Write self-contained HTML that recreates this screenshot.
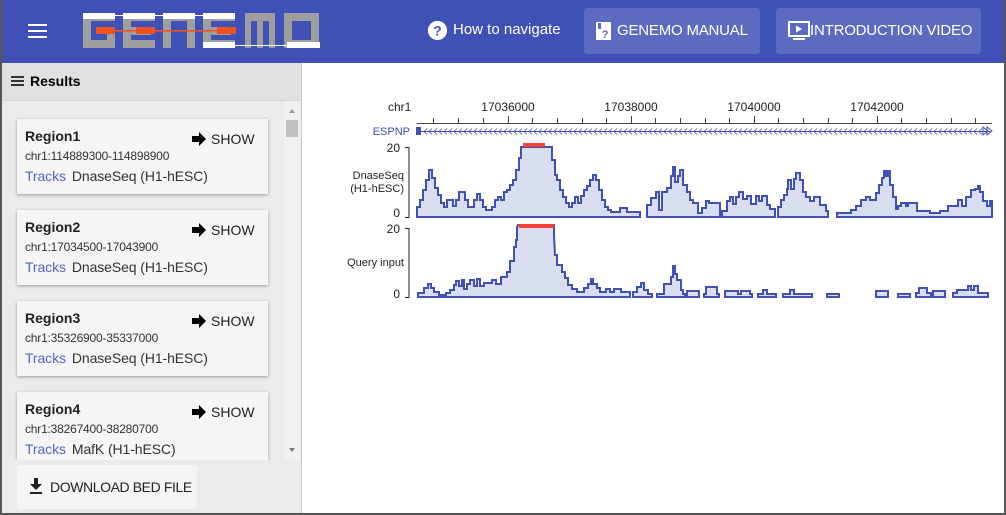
<!DOCTYPE html>
<html><head><meta charset="utf-8"><style>
*{margin:0;padding:0;box-sizing:border-box}
body{width:1006px;height:515px;overflow:hidden;font-family:"Liberation Sans",Arial,sans-serif;background:#fff;position:relative;white-space:nowrap}
.frame{position:absolute;left:0;top:0;width:1006px;height:515px;border:2px solid #555;border-top:none;pointer-events:none;z-index:10}
.hdr{position:absolute;left:0;top:0;width:1006px;height:63px;background:#3f51b5;color:#fff}
.btn{position:absolute;top:8px;height:46px;background:#5c6bc0;border-radius:3px;font-size:15px;line-height:46px;color:#fff;letter-spacing:-0.2px}
.left{position:absolute;left:0;top:63px;width:302px;height:452px;background:#ebebeb;border-right:1px solid #ccc}
.rh{height:38px;background:#e0e0e0;font-size:14px;font-weight:bold;line-height:36px;padding-left:30px;position:relative;border-bottom:1px solid #d5d5d5}
.card{position:absolute;left:17px;width:251px;height:75px;background:#f5f5f5;box-shadow:0 1px 3px rgba(0,0,0,.35)}
.card b{position:absolute;left:8px;top:9px;font-size:14px;color:#222}
.card .c{position:absolute;left:8px;top:30px;font-size:12px;color:#333;letter-spacing:-0.2px}
.card .t{position:absolute;left:8px;top:49px;font-size:14px;color:#333;letter-spacing:-0.1px}
.card .t span{color:#5565c4;margin-right:6px}
.card .s{position:absolute;left:174px;top:12px;font-size:14px;color:#222;padding-left:20px}
.card .s svg{position:absolute;left:0;top:0}
.sb{position:absolute;left:284px;top:101px;width:16px;height:359px;background:#f0f0f0}
</style></head><body>
<div class="hdr">
 <div style="position:absolute;left:28px;top:24px;width:19px;height:2px;background:#fff;box-shadow:0 6px 0 #fff,0 12px 0 #fff"></div>
 <svg style="position:absolute;left:83px;top:13px" width="237" height="36">
  <g fill="#9e9e9e">
   <path d="M0 0H32V8H8V27H24V20H32V35H0Z"/>
   <path d="M40 0H72V8H48V14H68V22H48V27H72V35H40Z"/>
   <path d="M80 0H112V35H104V8H88V35H80Z"/>
   <path d="M120 0H152V8H128V14H148V22H128V27H152V35H120Z"/>
   <path d="M162 0H192V35H186V8H180V35H174V8H168V35H162Z"/>
   <path d="M201 0H236V35H201ZM209 8V27H228V8Z"/>
  </g>
  <g fill="#fff">
   <rect x="0" y="0" width="32" height="6"/><rect x="40" y="0" width="32" height="6"/><rect x="80" y="0" width="32" height="6"/><rect x="120" y="0" width="32" height="6"/>
   <rect x="32" y="2" width="8" height="1"/><rect x="72" y="2" width="8" height="1"/><rect x="112" y="2" width="8" height="1"/>
   <rect x="120" y="29" width="32" height="6"/><rect x="204" y="29" width="33" height="6"/><rect x="152" y="32" width="52" height="1"/>
  </g>
  <g fill="#f4511e"><rect x="13" y="14" width="19" height="7"/><rect x="53" y="14" width="19" height="7"/><rect x="134" y="14" width="19" height="7"/><rect x="32" y="17" width="102" height="1.5"/></g>
 </svg>
 <svg style="position:absolute;left:427px;top:20px" width="21" height="21" viewBox="0 0 24 24"><circle cx="12" cy="12" r="11" fill="#fff"/><text x="12" y="17.5" font-size="16" font-weight="bold" text-anchor="middle" fill="#3f51b5" font-family="Liberation Sans">?</text></svg>
 <div style="position:absolute;left:453px;top:21px;font-size:15px">How to navigate</div>
 <div class="btn" style="left:584px;width:176px"><svg style="position:absolute;left:12px;top:14px" width="16" height="18" viewBox="0 0 16 18"><rect x="0" y="0" width="15" height="18" rx="1" fill="#fff"/><rect x="2" y="1" width="3" height="6" fill="#5c6bc0"/><text x="9" y="16" font-size="11" font-weight="bold" fill="#5c6bc0" text-anchor="middle" font-family="Liberation Sans">?</text></svg><span style="position:absolute;left:33px">GENEMO MANUAL</span></div>
 <div class="btn" style="left:776px;width:205px"><svg style="position:absolute;left:12px;top:13px" width="22" height="20" viewBox="0 0 22 20"><rect x="1" y="1" width="20" height="14" fill="none" stroke="#fff" stroke-width="2"/><path d="M8 4.5V11.5L14 8Z" fill="#fff"/><rect x="5" y="17" width="12" height="2" fill="#fff"/></svg><span style="position:absolute;left:34px">INTRODUCTION VIDEO</span></div>
</div>
<div class="left">
 <div class="rh"><div style="position:absolute;left:11px;top:13px;width:13px;height:2px;background:#333;box-shadow:0 4px 0 #333,0 8px 0 #333"></div>Results</div>
</div>
<div class="sb"><div style="position:absolute;left:2px;top:19px;width:12px;height:17px;background:#c1c1c1"></div><div style="position:absolute;left:5px;top:8px;border:3px solid transparent;border-bottom:4px solid #999;border-top:none"></div><div style="position:absolute;left:5px;top:347px;border:3px solid transparent;border-top:4px solid #777;border-bottom:none"></div></div>
<div style="position:absolute;left:0;top:101px;width:284px;height:359px;overflow:hidden">
 <div class="card" style="top:18px"><b>Region1</b><div class="c">chr1:114889300-114898900</div><div class="t"><span>Tracks</span>DnaseSeq (H1-hESC)</div><div class="s"><svg width="16" height="16" viewBox="0 0 16 16"><path d="M1 5H8V1L15 8L8 15V11H1Z" fill="#000"/></svg>SHOW</div></div>
 <div class="card" style="top:109px"><b>Region2</b><div class="c">chr1:17034500-17043900</div><div class="t"><span>Tracks</span>DnaseSeq (H1-hESC)</div><div class="s"><svg width="16" height="16" viewBox="0 0 16 16"><path d="M1 5H8V1L15 8L8 15V11H1Z" fill="#000"/></svg>SHOW</div></div>
 <div class="card" style="top:200px"><b>Region3</b><div class="c">chr1:35326900-35337000</div><div class="t"><span>Tracks</span>DnaseSeq (H1-hESC)</div><div class="s"><svg width="16" height="16" viewBox="0 0 16 16"><path d="M1 5H8V1L15 8L8 15V11H1Z" fill="#000"/></svg>SHOW</div></div>
 <div class="card" style="top:291px"><b>Region4</b><div class="c">chr1:38267400-38280700</div><div class="t"><span>Tracks</span>MafK (H1-hESC)</div><div class="s"><svg width="16" height="16" viewBox="0 0 16 16"><path d="M1 5H8V1L15 8L8 15V11H1Z" fill="#000"/></svg>SHOW</div></div>
</div>
<div style="position:absolute;left:17px;top:465px;width:180px;height:44px;background:#f5f5f5;border-radius:3px;font-size:14px;line-height:44px;color:#222;padding-left:33px;letter-spacing:-0.4px">
 <svg style="position:absolute;left:12px;top:13px" width="14" height="17" viewBox="0 0 14 17"><path d="M5 0H9V6H13L7 12L1 6H5Z" fill="#222"/><rect x="1" y="14" width="12" height="2" fill="#222"/></svg>DOWNLOAD BED FILE</div>

<svg style="position:absolute;left:0;top:0" width="1006" height="515" font-family="Liberation Sans" font-size="12">
 <defs><pattern id="chev" x="423" y="128" width="5" height="7" patternUnits="userSpaceOnUse"><path d="M4 0.5L1 3.5L4 6.5" fill="none" stroke="#3f51b5" stroke-width="0.8"/></pattern></defs>
 <text x="388" y="111" fill="#222">chr1</text>
 <g fill="#222" text-anchor="middle"><text x="508" y="111">17036000</text><text x="631" y="111">17038000</text><text x="754" y="111">17040000</text><text x="877" y="111">17042000</text></g>
 <path d="M417 123.5H992" stroke="#444"/>
 <path d="M433.5 118V123M458.5 118V123M483.5 118V123M508.5 116V123M532.5 118V123M557.5 118V123M582.5 118V123M606.5 118V123M631.5 116V123M655.5 118V123M680.5 118V123M705.5 118V123M729.5 118V123M754.5 116V123M778.5 118V123M803.5 118V123M828.5 118V123M852.5 118V123M877.5 116V123M901.5 118V123M926.5 118V123M951.5 118V123M975.5 118V123" stroke="#444"/>
 <text x="410" y="135" fill="#3f51b5" text-anchor="end" font-size="11">ESPNP</text>
 <rect x="416" y="127" width="5" height="8" fill="#3f51b5"/>
 <path d="M421 131.5H990" stroke="#3f51b5"/>
 <rect x="423" y="128" width="560" height="7" fill="url(#chev)"/>
 <path d="M983 127V135L988 131ZM987 127V135L992 131Z" fill="none" stroke="#3f51b5"/>
 <g fill="#222" text-anchor="end"><text x="400" y="152">20</text><text x="400" y="217">0</text><text x="400" y="233">20</text><text x="400" y="298">0</text></g>
 <text x="404" y="179" text-anchor="end" fill="#222" font-size="11">DnaseSeq</text>
 <text x="404" y="192" text-anchor="end" fill="#222" font-size="11">(H1-hESC)</text>
 <text x="404" y="266" text-anchor="end" fill="#222" font-size="11">Query input</text>
 <path d="M405 147.5H409V217.5H405M405 228.5H409V297.5H405" fill="none" stroke="#222"/>
 <g fill="#d9ddf0" stroke="#3f51b5" stroke-width="2" stroke-linejoin="miter">
  <path d="M417 217V207H420V200H423V190H426V180H429V170H432V178H435V188H438V195H441V203H444V207H447V200H453V206H456V200H459V192H465V200H468V207H474V200H477V194H480V200H483V207H486V210H492V207H495V200H498V197H501V200H504V192H507V190H510V185H513V180H516V170H519V158H521V147H552V160H555V175H557V180H560V190H563V197H566V203H569V207H572V203H575V197H578V203H581V196H584V190H587V186H590V180H593V175H596V180H599V190H602V200H605V207H608V210H611V212H620V208H627V212H640V217Z"/>
  <path d="M647 217V205H651V198H656V192H659V210H662V192H667V188H671V176H673V167H675V182H678V176H680V170H683V185H687V192H690V200H693V203H698V213H702V208H706V201H709V203H720V217Z"/>
  <path d="M722 217V211H727V201H730V197H733V204H736V197H739V192H743V199H747V196H751V204H756V196H759V201H762V196H767V205H770V209H775V217Z"/>
  <path d="M778 217V207H781V200H784V195H787V189H788V180H791V189H794V179H796V173H800V180H803V192H806V197H810V201H814V197H820V205H826V211H828V217Z"/>
  <path d="M837 217V213H851V210H856V206H861V200H866V197H870V200H876V193H879V185H882V178H884V171H886V176H888V171H890V185H893V197H896V209H898V206H901V203H906V206H908V203H917V211H930V213H940V211H948V206H958V200H962V206H966V197H971V190H975V189H978V186H980V192H983V201H987V206H990V201H992V217Z"/>
  <path d="M418 297V293H424V288H428V284H431V288H434V292H439V295H446V297Z"/>
  <path d="M446 297V293H450V290H454V285H456V281H459V286H462V280H464V289H467V284H470V280H474V286H477V279H480V286H484V283H492V280H496V284H501V277H507V272H510V261H514V247H516V240H517V227L518 225H554V235L555 255H557V265H562V272H565V278H568V285H572V289H577V292H584V288H588V284H591V279H593V284H597V288H600V292H606V289H610V292H614V289H621V292H630V297Z"/>
  <path d="M633 297V292H637V287H641V283H644V290H648V294H652V297Z"/>
  <path d="M657 297V294H664V284H671V277H673V266H675V274H677V280H681V290H683V294H685V297Z"/>
  <path d="M687 297V291H699V297Z"/>
  <path d="M704 297V294H706V287H717V294H719V297Z"/>
  <path d="M725 297V291H738V294H741V291H750V294H752V297Z"/>
  <path d="M758 297V294H763V290H767V294H776V297Z"/>
  <path d="M783 297V294H790V290H794V294H812V297Z"/>
  <path d="M827 297V294H839V297Z"/>
  <path d="M876 297V291H888V297Z"/>
  <path d="M898 297V294H910V297Z"/>
  <path d="M916 297V293H919V288H927V293H931V297Z"/>
  <path d="M933 297V291H945V297Z"/>
  <path d="M953 297V293H957V290H968V286H971V290H974V286H978V293H988V297Z"/>
 </g>
 <path d="M523 145H545M519 226H554" stroke="#f44336" stroke-width="4"/>
</svg>
<div class="frame"></div>
</body></html>
